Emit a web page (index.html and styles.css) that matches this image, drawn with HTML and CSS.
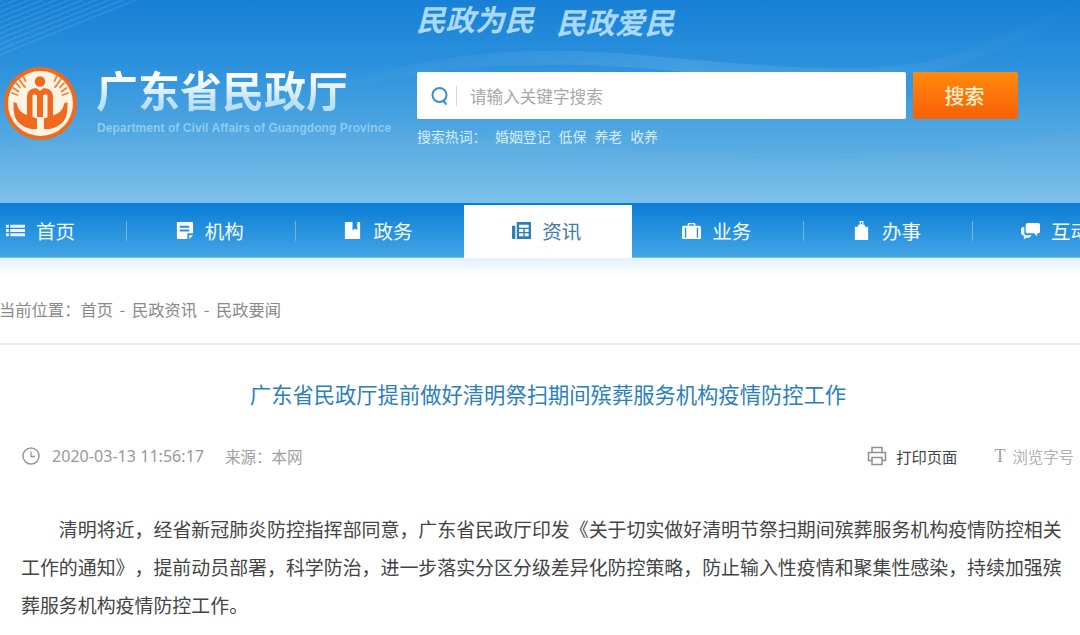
FILE: index.html
```html
<!DOCTYPE html>
<html lang="zh-CN">
<head>
<meta charset="utf-8">
<title>广东省民政厅</title>
<link rel="stylesheet" href="styles.css">
</head>
<body>
<div class="page">
  <header class="header">
    <svg class="waves" viewBox="0 0 1080 203" preserveAspectRatio="none" aria-hidden="true">
      <defs>
        <pattern id="stripes" width="5" height="5" patternUnits="userSpaceOnUse" patternTransform="rotate(-22)">
          <rect width="5" height="1.600" fill="#fff" opacity=".1"/>
        </pattern>
        <linearGradient id="band" x1="0" y1="0" x2="1" y2="0">
          <stop offset="0" stop-color="#fff" stop-opacity="0"/>
          <stop offset=".5" stop-color="#fff" stop-opacity=".11"/>
          <stop offset="1" stop-color="#fff" stop-opacity="0"/>
        </linearGradient>
      </defs>
      <path d="M0 0H138C95 20 50 38 0 57Z" fill="url(#stripes)"/>
      <path d="M300 100C420 50 530 45 640 55C760 66 860 75 925 62C985 48 1040 20 1080 0V10C1040 32 990 60 930 72C850 88 760 78 640 68C530 60 420 65 300 100Z" fill="url(#band)"/>
      <path d="M0 150C200 120 420 130 620 150C800 168 960 160 1080 130V203H0Z" fill="#fff" opacity=".03"/>
    </svg>
    <div class="brand">
      <svg class="logo" viewBox="0 0 73 73" aria-hidden="true">
        <circle cx="36.500" cy="36.500" r="36.500" fill="#f0691c"/>
        <circle cx="36.500" cy="36.500" r="32.500" fill="#fff3e4"/>
        <circle cx="36" cy="14.500" r="5.200" fill="#f0691c"/>
        <g stroke="#f0823a" stroke-width="1.800" stroke-linecap="round" fill="none">
          <path d="M19 9l2.500 5M15 12l3.500 5M12 16l4 4.500M9.500 21l5 3.500M8 26l5.500 2M19 18l2 2"/>
          <path d="M53 9l-2.500 5M57 12l-3.500 5M60 16l-4 4.500M62.500 21l-5 3.500M64 26l-5.500 2M53 18l-2 2"/>
        </g>
        <path d="M23 30C23 23 29 20.500 33 21.500L36 24L39 21.500C43 20.500 49 23 49 30V50H43.500V29C43.500 27 40 27 39 28.500V50H33V28.500C32 27 28.500 27 28.500 29V50H23Z" fill="#f0691c"/>
        <path d="M9.500 35L13 36.500C13.500 42 17 46 23 48L33 51.500V62C24 63 14 58 11 50C9.500 45 9.500 40 9.500 35Z" fill="#f0691c"/>
        <path d="M63.500 35L60 36.500C59.500 42 56 46 50 48L40 51.500V62C49 63 59 58 62 50C63.500 45 63.500 40 63.500 35Z" fill="#f0691c"/>
      </svg>
      <div class="brand-text">
        <div class="brand-cn">广东省民政厅</div>
        <div class="brand-en">Department of Civil Affairs of Guangdong Province</div>
      </div>
    </div>
    <div class="tools">
      <div class="slogan"><span>民政为民</span><span class="slogan-low">民政爱民</span></div>
      <div class="search-row">
        <div class="search-box">
          <svg class="search-icon" viewBox="0 0 18 20" aria-hidden="true"><circle cx="8.500" cy="9" r="7" fill="none" stroke="#3d90c4" stroke-width="2"/><path d="M11.500 14l4 4.500" stroke="#3d90c4" stroke-width="2" fill="none"/></svg>
          <span class="search-text">请输入关键字搜索</span>
        </div>
        <div class="search-btn">搜索</div>
      </div>
      <div class="hot"><span class="hot-label">搜索热词：</span><span class="hot-a">婚姻登记</span><span>低保</span><span>养老</span><span>收养</span></div>
    </div>
  </header>

  <nav class="nav">
    <a class="nav-item">
      <svg class="nav-icon" viewBox="0 0 20 20" aria-hidden="true"><path d="M0 4h3v3H0zM0 8.500h3v3H0zM0 13h3v3H0zM4.500 4H20v3H4.500zM4.500 8.500H20v3H4.500zM4.500 13H20v3H4.500z" fill="#fff" fill-opacity=".9"/></svg>首页</a>
    <i class="sep"></i>
    <a class="nav-item">
      <svg class="nav-icon" viewBox="0 0 20 20" aria-hidden="true"><path d="M2 1h16a1 1 0 0 1 1 1v11h-6v6H3a1 1 0 0 1-1-1zM5 5v2h10V5zM5 9v2h10V9zM15 15h4l-4 4z" fill="#fff" fill-rule="evenodd"/></svg>机构</a>
    <i class="sep"></i>
    <a class="nav-item">
      <svg class="nav-icon" viewBox="0 0 20 20" aria-hidden="true"><path d="M2 1h16v18H2zM10 1v9l2.500-2 2.500 2V1z" fill="#fff" fill-rule="evenodd"/></svg>政务</a>
    <i class="sep sep-off"></i>
    <a class="nav-item is-active">
      <svg class="nav-icon" viewBox="0 0 20 20" aria-hidden="true"><path d="M5 1h15v18H5zM7.500 4v3h10V4zM7.500 8.500v3h4.500v-3zM13.500 8.500v3h4v-3zM7.500 13v3h4.500v-3zM13.500 13v3h4v-3zM0 5h3.500v14H1a1 1 0 0 1-1-1z" fill="#2f7fb3" fill-rule="evenodd"/></svg>资讯</a>
    <i class="sep sep-off"></i>
    <a class="nav-item nav-item-wide">
      <svg class="nav-icon" viewBox="0 0 20 20" aria-hidden="true"><path d="M7 2h6a1 1 0 0 1 1 1v2h4a2 2 0 0 1 2 2v11a1 1 0 0 1-1 1H1a1 1 0 0 1-1-1V7a2 2 0 0 1 2-2h4V3a1 1 0 0 1 1-1zM7.500 3.500V5h5V3.500zM3 7v10.500h1.500V7zM15.500 7v10.500H17V7z" fill="#fff" fill-rule="evenodd"/></svg>业务</a>
    <i class="sep"></i>
    <a class="nav-item">
      <svg class="nav-icon" viewBox="0 0 20 20" aria-hidden="true"><path d="M3 6h3.500V4H8V0h4v4h1.500v2H17v14H3zM9.200 1.300v2h1.600v-2z" fill="#fff" fill-rule="evenodd"/></svg>办事</a>
    <i class="sep"></i>
    <a class="nav-item">
      <svg class="nav-icon" viewBox="0 0 20 20" aria-hidden="true"><path d="M7 2h11a2 2 0 0 1 2 2v7a2 2 0 0 1-2 2h-1v3l-3.500-3H7a2 2 0 0 1-2-2V4a2 2 0 0 1 2-2z" fill="#fff"/><path d="M3.500 6v6a3 3 0 0 0 3 3h5l-3 2.500H5.500L3 19.500V15.500C1 15 0 14 0 12V8.500C0 7 1.500 6 3.500 6z" fill="#fff" fill-opacity=".9"/></svg>互动</a>
  </nav>
  <div class="nav-shade"></div>

  <div class="crumb">当前位置：首页 - 民政资讯 - 民政要闻</div>

  <main class="article">
    <h1 class="title">广东省民政厅提前做好清明祭扫期间殡葬服务机构疫情防控工作</h1>
    <div class="meta">
      <div class="meta-left">
        <svg class="clock" viewBox="0 0 18 18" aria-hidden="true"><circle cx="9" cy="9" r="8" fill="none" stroke="#999" stroke-width="1.500"/><path d="M9 4.500V9.500H13" fill="none" stroke="#999" stroke-width="1.300"/></svg>
        <span class="date">2020-03-13 11:56:17</span>
        <span class="source">来源：本网</span>
      </div>
      <div class="meta-right">
        <svg class="printer" viewBox="0 0 20 20" aria-hidden="true"><path d="M5 6V1.500h10V6M5 14.500H1.500V6.500h17v8H15M5 11.500h10v7H5z" fill="none" stroke="#8f8f8f" stroke-width="1.500"/></svg>
        <span class="print">打印页面</span>
        <span class="t-mark">T</span>
        <span class="fontsize">浏览字号</span>
      </div>
    </div>
    <p class="body">清明将近，经省新冠肺炎防控指挥部同意，广东省民政厅印发《关于切实做好清明节祭扫期间殡葬服务机构疫情防控相关工作的通知》，提前动员部署，科学防治，进一步落实分区分级差异化防控策略，防止输入性疫情和聚集性感染，持续加强殡葬服务机构疫情防控工作。</p>
  </main>
</div>
</body>
</html>
```
FILE: styles.css
```css
* { box-sizing: border-box; }
html, body { margin: 0; padding: 0; background: #fff; }
body { font-family: "Noto Sans CJK SC", "Noto Sans", sans-serif; text-spacing-trim: space-all; }
.page { width: 1080px; height: 635px; overflow: hidden; }

.header {
  position: relative;
  height: 203px;
  display: flex;
  align-items: flex-start;
  padding-left: 4px;
  background: linear-gradient(180deg, #1780d6 0%, #2a90dc 30%, #55aae2 70%, #79bfe9 100%);
}
.waves { position: absolute; left: 0; top: 0; width: 1080px; height: 203px; }
.brand { position: relative; width: 413px; margin-top: 67px; display: flex; align-items: flex-start; }
.logo { width: 73px; height: 73px; flex: none; }
.brand-text { margin-left: 19px; margin-top: -3px; }
.brand-cn {
  height: 50px;
  font-size: 42px;
  line-height: 50px;
  font-weight: 700;
  white-space: nowrap;
  color: #e9f5fc;
  background: linear-gradient(180deg, #fff 25%, #b9e0f7 80%);
  -webkit-background-clip: text;
  background-clip: text;
  -webkit-text-fill-color: transparent;
}
.brand-en {
  margin: 6px 0 0 1px;
  font-family: "Liberation Sans", sans-serif;
  font-size: 12px;
  line-height: 16px;
  font-weight: 700;
  letter-spacing: .08px;
  white-space: nowrap;
  color: #8ccbf0;
}

.tools { position: relative; width: 610px; }
.slogan {
  height: 67px;
  display: flex;
  gap: 22px;
  margin-left: -1px;
  font-size: 29.500px;
  line-height: 36px;
  font-style: italic;
  font-weight: 700;
  color: #a9d9f6;
}
.slogan-low { margin-top: 3px; }
.search-row { display: flex; margin-top: 5px; height: 47px; gap: 7px; }
.search-box {
  width: 489px;
  background: #fff;
  border-radius: 2px;
  display: flex;
  align-items: center;
  padding-left: 14px;
}
.search-icon { width: 18px; height: 20px; flex: none; }
.search-text {
  margin-left: 7px;
  padding-left: 13px;
  border-left: 1px solid #cfdbe3;
  height: 20px;
  font-size: 16.600px;
  line-height: 20px;
  color: #a8a8a8;
}
.search-btn {
  width: 105px;
  padding-right: 2px;
  border-radius: 2px;
  background: linear-gradient(180deg, #ff8a0d, #fa6006);
  color: #ffedc9;
  font-size: 20px;
  line-height: 47px;
  text-align: center;
  font-weight: 500;
}
.hot {
  display: flex;
  margin-top: 7px;
  font-size: 13.900px;
  line-height: 20px;
  color: #d6edfa;
  gap: 8px;
}
.hot-label { width: 70px; }

.nav {
  display: flex;
  align-items: stretch;
  height: 55px;
  margin-left: -42px;
  width: 1200px;
  padding-top: 2px;
  background: linear-gradient(180deg, #0a7dd5, #44a6e6);
  box-shadow: inset 0 -1px 0 #6fc0ef;
}
.nav-item {
  flex: 0 0 167.800px;
  display: flex;
  align-items: center;
  justify-content: center;
  gap: 11px;
  color: #f2f9fd;
  font-size: 19.500px;
  padding: 0 3px 2px 0;
}
.nav-item-wide { flex-basis: 170px; }
.nav-item.is-active { background: #fff; color: #3c7ca6; box-shadow: inset 0 -1px 0 #fff; }
.nav-icon { width: 19px; height: 19px; flex: none; }
.sep {
  flex: 0 0 1px;
  height: 20px;
  align-self: center;
  margin-bottom: 2px;
  background: #6bb6e8;
}
.sep-off { background: transparent; }
.nav-shade { height: 17px; background: linear-gradient(180deg, #e3f1fa, #fdfeff); }

.crumb {
  height: 70px;
  width: 1081px;
  margin-left: -1px;
  border-bottom: 2px solid #eeeeee;
  font-size: 16.300px;
  line-height: 68px;
  word-spacing: 3px;
  color: #8a8a8a;
  white-space: nowrap;
}

.article { padding-left: 22px; width: 1074px; }
.title {
  margin: 29px 0 0;
  height: 40px;
  font-size: 21.300px;
  line-height: 40px;
  font-weight: 400;
  text-align: center;
  color: #2b80ba;
  white-space: nowrap;
}
.meta { margin-top: 27px; height: 30px; display: flex; justify-content: space-between; align-items: center; }
.meta-left, .meta-right { display: flex; align-items: center; }
.clock { width: 18px; height: 18px; flex: none; }
.date { margin-left: 12px; font-family: "Noto Sans", sans-serif; font-size: 16.100px; color: #999; }
.source { margin-left: 21px; font-size: 15.500px; color: #a0a0a0; }
.printer { width: 20px; height: 20px; flex: none; }
.print { margin-left: 9px; font-size: 15.300px; color: #444; }
.t-mark { margin-left: 37px; font-family: "Liberation Serif", serif; font-size: 18px; color: #a0a0a0; }
.fontsize { margin-left: 7px; font-size: 15.400px; color: #b0b0b0; }

.body {
  margin: 39px 0 0 -1px;
  width: 1042px;
  font-size: 18.930px;
  line-height: 38px;
  text-indent: 2em;
  color: #444;
}
```
